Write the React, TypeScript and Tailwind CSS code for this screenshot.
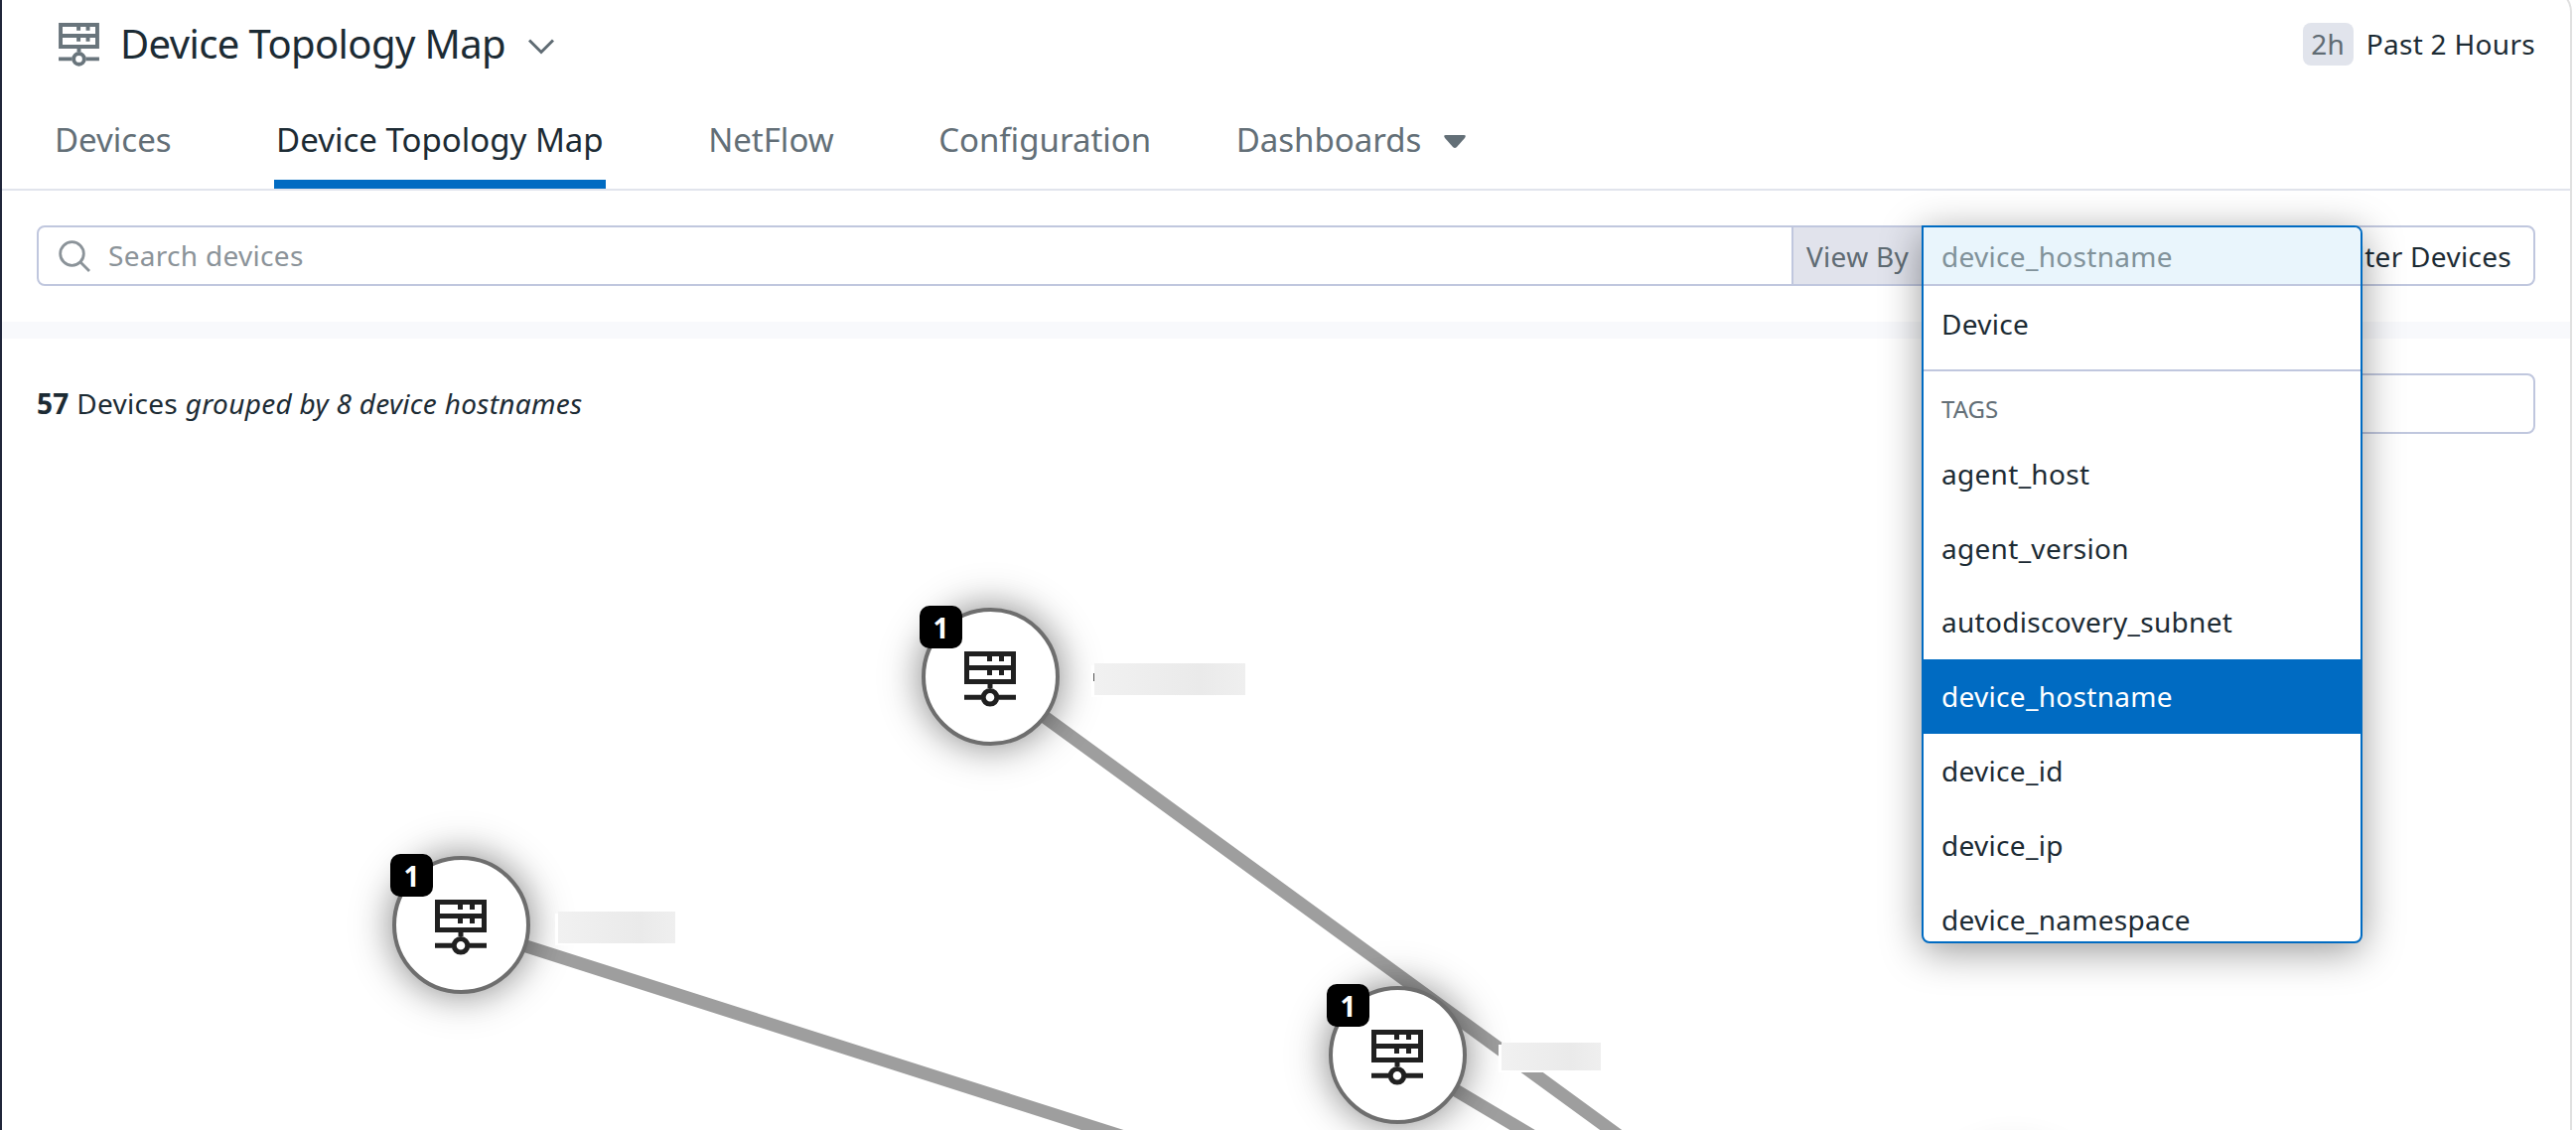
function DeviceIcon({ className }: { className: string }) {
  return (
    <svg viewBox="0 0 52 56" className={className} fill="none" stroke="currentColor" strokeWidth="5">
      <path d="M2.5 2.5H49.5V30.5H2.5ZM2.5 16.5H49.5M25.5 2V10M37.5 2V10M25.5 16V24M37.5 16V24M26 30V37M0 46.3H17M35 46.3H52" />
      <circle cx="26" cy="46.3" r="6.8" />
    </svg>
  );
}

const nodes = [
  { x: 997, y: 682, labelX: 1102, labelY: 668, labelW: 152, labelH: 32 },
  { x: 464, y: 932, labelX: 562, labelY: 918, labelW: 118, labelH: 32 },
  { x: 1407, y: 1063, labelX: 1512, labelY: 1050, labelW: 100, labelH: 28 },
];

const tags = [
  "agent_host",
  "agent_version",
  "autodiscovery_subnet",
  "device_hostname",
  "device_id",
  "device_ip",
  "device_namespace",
];

function Tab({ label, active }: { label: string; active?: boolean }) {
  return (
    <div className={active ? "border-b-[9px] border-[#006bc2] px-[2px] text-[#1c2b34]" : "border-b-[9px] border-transparent px-[2px]"}>
      {label}
    </div>
  );
}

function Node({ x, y, labelX, labelY, labelW, labelH }: (typeof nodes)[number]) {
  return (
    <>
      <div
        className="absolute size-[139px] rounded-full border-4 border-[#6e6e6e] bg-white shadow-[0_0_36px_16px_rgba(0,0,0,0.11),0_0_30px_rgba(0,0,0,0.33)]"
        style={{ left: x - 69, top: y - 70 }}
      >
        <DeviceIcon className="absolute left-[39px] top-[40px] h-[56px] w-[52px] text-[#202020]" />
        <div className="absolute left-[-6px] top-[-6px] flex size-[43px] items-center justify-center rounded-[10px] bg-black text-[28px] font-bold text-white">
          1
        </div>
      </div>
      <div
        className="absolute bg-linear-to-r from-[#f1f1f1] via-[#eaeaea] via-70% to-[#efefef] shadow-[-3px_2px_0_#fff]"
        style={{ left: labelX, top: labelY, width: labelW, height: labelH }}
      />
    </>
  );
}

export default function App() {
  return (
    <div className="relative h-[1138px] w-[2594px] overflow-hidden bg-white font-['Noto_Sans',sans-serif] text-[#1c2b34]">
      <div className="absolute inset-0">
        <svg className="absolute inset-0 size-full" stroke="#9e9e9e" strokeWidth="13">
          <path d="M997 682L1640 1151M464 932L1176 1159M1407 1063L1560 1154" />
        </svg>
        {nodes.map((n) => (
          <Node key={n.x} {...n} />
        ))}
        <div className="absolute left-[1958px] top-[1170px] size-[139px] rounded-full shadow-[0_0_36px_16px_rgba(0,0,0,0.11),0_0_30px_rgba(0,0,0,0.33)]" />
        <div className="absolute left-[1101px] top-[678px] h-2 w-px bg-[#555]" />
      </div>

      <div className="relative flex h-full flex-col border-l-2 border-[#20263a]">
        <header className="flex h-[90px] items-center pl-[57px] pr-[41px]">
          <DeviceIcon className="h-[44px] w-[41px] text-[#69757c]" />
          <h1 className="ml-[21px] pb-[2px] text-[40px] leading-none tracking-[-0.6px]">Device Topology Map</h1>
          <svg viewBox="0 0 26 16" className="ml-[23px] mt-[3px] h-4 w-[26px]" fill="none" stroke="#5f6b73" strokeWidth="3">
            <path d="M1 1.5L13 13.5L25 1.5" />
          </svg>
          <div className="ml-auto flex items-center gap-[13px] pb-[2px] text-[28px] leading-none tracking-[0.3px]">
            <span className="flex h-[43px] w-[51px] items-center justify-center rounded-[8px] bg-[#e1e4ec] text-[#5f6b73]">2h</span>
            Past 2 Hours
          </div>
        </header>

        <nav className="flex h-[102px] gap-[101.5px] border-b-2 border-[#e1e4ec] pl-[51px] text-[33px] leading-[102px] text-[#636f77]">
          <Tab label="Devices" />
          <Tab label="Device Topology Map" active />
          <Tab label="NetFlow" />
          <Tab label="Configuration" />
          <div className="ml-[-20px] flex">
            <Tab label="Dashboards" />
            <svg viewBox="0 0 22 13" className="ml-[21px] mt-[5px] h-[13px] w-[22px] self-center" fill="#636f77">
              <path d="M2 0H20Q23 0 21 3L13 12Q11 14 9 12L1 3Q-1 0 2 0Z" />
            </svg>
          </div>
        </nav>

        <div className="flex h-[132px] items-start pl-[35px] pr-[41px] pt-[35px] text-[28px] leading-none tracking-[0.3px]">
          <div className="flex h-[61px] w-[1769px] items-center rounded-l-[8px] border-2 border-[#c0c7de] pl-[20px] text-[#8b9399]">
            <svg viewBox="0 0 32 32" className="size-8" fill="none" stroke="currentColor" strokeWidth="2.8">
              <circle cx="13.5" cy="13.5" r="11.8" />
              <path d="M22 22L31 31" />
            </svg>
            <span className="ml-[18px] pb-[2px]">Search devices</span>
          </div>
          <div className="flex h-[61px] w-[131px] items-center border-y-2 border-[#c0c7de] bg-[#e1e3ec] pl-[13px] text-[#5f6b73]">
            View By
          </div>
          <div className="flex h-[61px] flex-1 items-center justify-end rounded-r-[8px] border-2 border-[#c0c7de] pr-[22px]">
            Filter Devices
          </div>
        </div>
        <div className="mr-[6px] h-[17px] bg-[#f8f9fc]" />

        <div className="flex items-center justify-between pl-[35px] pr-[41px] pt-[35px] text-[28px] leading-none tracking-[0.3px]">
          <p className="pb-[2px]">
            <b className="font-bold">57</b> Devices <i>grouped by 8 device hostnames</i>
          </p>
          <div className="h-[61px] w-[500px] rounded-[8px] border-2 border-[#c0c7de]" />
        </div>
      </div>

      <div className="absolute right-0 top-0 h-full w-[4px] bg-white" />
      <div className="absolute right-[4px] top-[-12px] h-[1200px] w-[40px] rounded-tr-[24px] border-r-2 border-t-2 border-[#e0e0e0]" />

      <div className="absolute left-[1935px] top-[227px] flex h-[723px] w-[444px] flex-col overflow-hidden rounded-[8px] rounded-tl-none border-2 border-[#006bc2] bg-white text-[28px] leading-none tracking-[0.3px] shadow-[0_8px_40px_rgba(0,0,0,0.4)]">
        <div className="flex h-[59px] shrink-0 items-center border-b-2 border-[#c0c7de] bg-[#e9f5fc] pl-[18px] text-[#81929a]">
          device_hostname
        </div>
        <div className="flex h-[86px] shrink-0 items-center border-b-2 border-[#c0c7de] pb-[9px] pl-[18px]">Device</div>
        <div className="flex h-[65.5px] shrink-0 items-center pl-[18px] pt-[11px] text-[24px] tracking-normal text-[#636f77]">TAGS</div>
        {tags.map((t) => (
          <div
            key={t}
            className={
              t === "device_hostname"
                ? "flex h-[74.8px] shrink-0 items-center bg-[#006bc2] pl-[18px] text-white"
                : "flex h-[74.8px] shrink-0 items-center pl-[18px]"
            }
          >
            {t}
          </div>
        ))}
      </div>
    </div>
  );
}
